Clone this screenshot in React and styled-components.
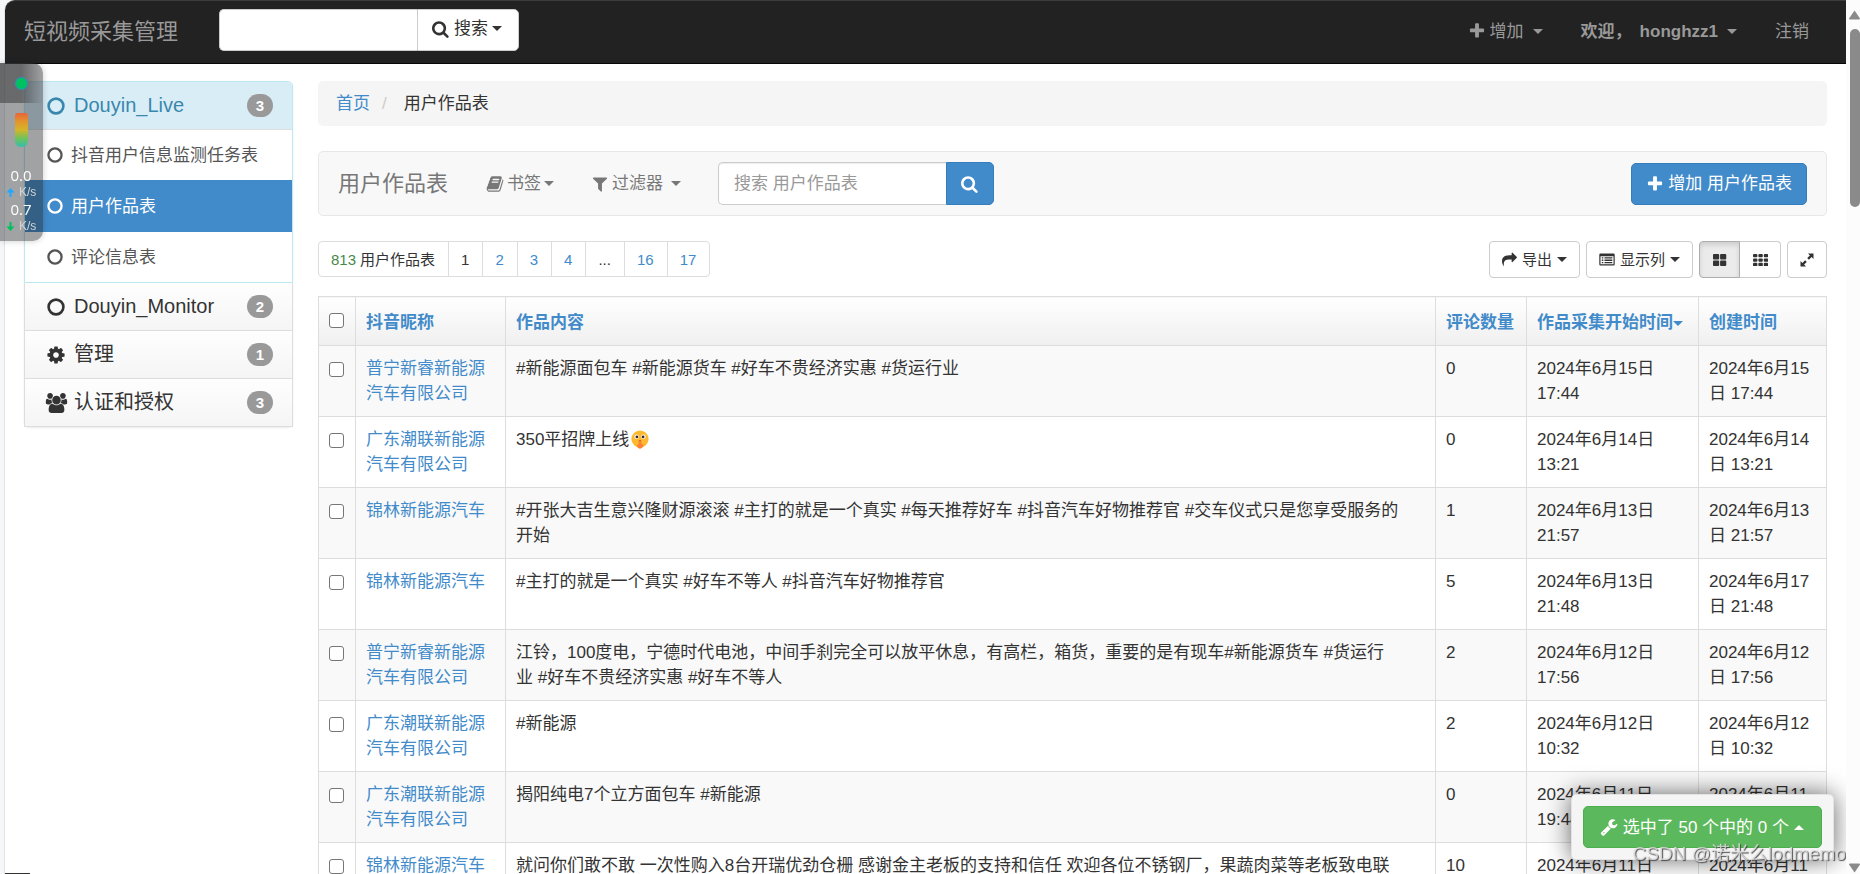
import React from "react";
import styled, { createGlobalStyle, css } from "styled-components";

const GlobalStyle = createGlobalStyle`
  *, *::before, *::after { box-sizing: border-box; }
  html { scrollbar-width: none; }
  body {
    margin: 0;
    background: #f6f7f8;
    color: #333;
    font: 17px/25px "Liberation Sans", "Noto Sans CJK SC", sans-serif;
  }
  a { color: #428bca; text-decoration: none; }
  button, input { font: inherit; color: inherit; margin: 0; }
  button { cursor: pointer; }
  ul, ol { list-style: none; margin: 0; padding: 0; }
`;

/* ---------- icons ---------- */

const PATHS = {
  search:
    "M1152 832q0-185-131.5-316.5t-316.5-131.5-316.5 131.5-131.5 316.5 131.5 316.5 316.5 131.5 316.5-131.5 131.5-316.5zm512 832q0 52-38 90t-90 38q-54 0-90-38l-343-342q-179 124-399 124-143 0-273.5-55.5t-225-150-150-225-55.5-273.5 55.5-273.5 150-225 225-150 273.5-55.5 273.5 55.5 225 150 150 225 55.5 273.5q0 220-124 399l343 343q37 37 37 90z",
  book:
    "M1703 478q40 57 18 129l-275 906q-19 64-76.5 107.5t-122.5 43.5h-923q-77 0-148.5-53.5t-99.5-131.5q-24-67-2-127 0-4 3-27t4-37q1-8-3-21.5t-3-19.5q2-11 8-21t16.5-23.5 16.5-23.5q23-38 45-91.5t30-91.5q3-10 .5-30t-.5-28q3-11 17-28t17-23q21-36 42-92t25-90q1-9-2.5-32t.5-28q4-13 22-30.5t22-22.5q19-26 42.5-84.5t27.5-96.5q1-8-3-25.5t-2-26.5q2-8 9-18t18-23 17-21q8-12 16.5-30.5t15-35 16-36 19.5-32 26.5-23.5 36-11.5 47.5 5.5l-1 3q38-9 51-9h761q74 0 114 56t18 130l-274 906q-36 119-71.5 153.5t-128.5 34.5h-869q-27 0-38 15-11 16-1 43 24 70 144 70h923q29 0 56-15.5t35-41.5l300-987q7-22 5-57 38 15 59 43zm-1064 2q-4 13 2 22.5t20 9.5h608q13 0 25.5-9.5t16.5-22.5l21-64q4-13-2-22.5t-20-9.5h-608q-13 0-25.5 9.5t-16.5 22.5zm-83 256q-4 13 2 22.5t20 9.5h608q13 0 25.5-9.5t16.5-22.5l21-64q4-13-2-22.5t-20-9.5h-608q-13 0-25.5 9.5t-16.5 22.5z",
  filter:
    "M1595 295q17 41-14 70l-493 493v742q0 42-39 59-13 5-25 5-27 0-45-19l-256-256q-19-19-19-45v-486l-493-493q-31-29-14-70 17-39 59-39h1280q42 0 59 39z",
  plus:
    "M1600 736v192q0 40-28 68t-68 28h-416v416q0 40-28 68t-68 28h-192q-40 0-68-28t-28-68v-416h-416q-40 0-68-28t-28-68v-192q0-40 28-68t68-28h416v-416q0-40 28-68t68-28h192q40 0 68 28t28 68v416h416q40 0 68 28t28 68z",
  cog:
    "M1152 896q0-106-75-181t-181-75-181 75-75 181 75 181 181 75 181-75 75-181zm512-109v222q0 12-8 23t-20 13l-185 28q-19 54-39 91 35 50 107 138 10 12 10 25t-9 23q-27 37-99 108t-94 71q-12 0-26-9l-138-108q-44 23-91 38-16 136-29 186-7 28-36 28h-222q-14 0-24.5-8.5t-11.5-21.5l-28-184q-49-16-90-37l-141 107q-10 9-25 9-14 0-25-11-126-114-165-168-7-10-7-23 0-12 8-23 15-21 51-66.5t54-70.5q-27-50-41-99l-183-27q-13-2-21-12.5t-8-23.5v-222q0-12 8-23t19-13l186-28q14-46 39-92-40-57-107-138-10-12-10-24 0-10 9-23 26-36 98.5-107.5t94.5-71.5q13 0 26 10l138 107q44-23 91-38 16-136 29-186 7-28 36-28h222q14 0 24.5 8.5t11.5 21.5l28 184q49 16 90 37l142-107q9-9 24-9 13 0 25 10 129 119 165 170 7 8 7 22 0 12-8 23-15 21-51 66.5t-54 70.5q26 50 41 98l183 28q13 2 21 12.5t8 23.5z",
  group:
    "M657 896q-162 5-265 128h-134q-82 0-138-40.5t-56-118.5q0-353 124-353 6 0 43.5 21t97.5 42.5 119 21.5q67 0 133-23-5 37-5 66 0 139 81 256zm1071 637q0 120-73 189.5t-194 69.5h-874q-121 0-194-69.5t-73-189.5q0-53 3.5-103.5t14-109 26.5-108.5 43-97.5 62-81 85.5-53.5 111.5-20q10 0 43 21.5t73 48 107 48 135 21.5 135-21.5 107-48 73-48 43-21.5q61 0 111.5 20t85.5 53.5 62 81 43 97.5 26.5 108.5 14 109 3.5 103.5zm-1024-1277q0 106-75 181t-181 75-181-75-75-181 75-181 181-75 181 75 75 181zm704 384q0 159-112.5 271.5t-271.5 112.5-271.5-112.5-112.5-271.5 112.5-271.5 271.5-112.5 271.5 112.5 112.5 271.5zm576 225q0 78-56 118.5t-138 40.5h-134q-103-123-265-128 81-117 81-256 0-29-5-66 66 23 133 23 59 0 119-21.5t97.5-42.5 43.5-21q124 0 124 353zm-128-609q0 106-75 181t-181 75-181-75-75-181 75-181 181-75 181 75 75 181z",
  share:
    "M1792 640q0 26-19 45l-512 512q-19 19-45 19t-45-19-19-45v-256h-224q-98 0-175.5 6t-154 21.5-133 42.5-105.5 69.5-80 101-48.5 138.5-17.5 181q0 55 5 123 0 6 2.5 23.5t2.5 26.5q0 15-8.5 25t-23.5 10q-16 0-28-17-7-9-13-22t-13.5-30-10.5-24q-127-285-127-451 0-199 53-333 162-403 875-403h224v-256q0-26 19-45t45-19 45 19l512 512q19 19 19 45z",
  wrench:
    "M448 1472q0-26-19-45t-45-19-45 19-19 45 19 45 45 19 45-19 19-45zm644-420l-682 682q-37 37-90 37-52 0-91-37l-106-108q-38-36-38-90 0-53 38-91l681-681q39 98 114.5 173.5t173.5 114.5zm634-435q0 39-23 106-47 134-164.5 217.5t-258.5 83.5q-185 0-316.5-131.5t-131.5-316.5 131.5-316.5 316.5-131.5q58 0 121.5 16.5t107.5 46.5q16 11 16 28t-16 28l-293 169v224l193 107q5-3 79-48.5t135.5-81 70.5-35.5q15 0 23.5 10t8.5 25z",
};

const IconSvg = styled.svg`
  flex: none;
  display: block;
  fill: currentColor;
`;

const Icon = ({ name, size = 18 }) => {
  const w = name === "group" ? 2048 : 1792;
  return (
    <IconSvg
      width={Math.round((size * w) / 1792)}
      height={size}
      viewBox={`0 0 ${w} 1792`}
      aria-hidden="true"
    >
      <path d={PATHS[name]} />
    </IconSvg>
  );
};

const Ring = ({ size }) => (
  <IconSvg width={size} height={size} viewBox="0 0 18 18" aria-hidden="true">
    <circle cx="9" cy="9" r="7.4" fill="none" stroke="currentColor" strokeWidth="2.6" />
  </IconSvg>
);

const ListAltIcon = () => (
  <IconSvg width="16" height="14" viewBox="0 0 16 14" aria-hidden="true">
    <path
      fillRule="evenodd"
      d="M1.5 0.5h13a1.2 1.2 0 0 1 1.2 1.2v9.6a1.2 1.2 0 0 1-1.2 1.2h-13a1.2 1.2 0 0 1-1.2-1.2V1.7A1.2 1.2 0 0 1 1.5.5zM1.5 3.2v8h13v-8z"
    />
    <path d="M2.8 4.3h1.5v1.3H2.8zM5.5 4.3h7.8v1.3H5.5zM2.8 6.6h1.5v1.3H2.8zM5.5 6.6h7.8v1.3H5.5zM2.8 8.9h1.5v1.3H2.8zM5.5 8.9h7.8v1.3H5.5z" />
  </IconSvg>
);

const GridIcon = ({ count }) => {
  const step = count === 2 ? 7.6 : 5.4;
  const w = count === 2 ? 6.6 : 4.4;
  const h = count === 2 ? 5.6 : 3.4;
  const stepY = count === 2 ? 6.5 : 4.5;
  const cells = [];
  for (let r = 0; r < count; r++)
    for (let c = 0; c < count; c++)
      cells.push(<rect key={`${r}${c}`} x={c * step} y={r * stepY} width={w} height={h} rx="1" />);
  return (
    <IconSvg width={count === 2 ? 14 : 15} height="12" viewBox="0 0 15 12.2" preserveAspectRatio="none" aria-hidden="true">
      {cells}
    </IconSvg>
  );
};

const ExpandIcon = () => (
  <IconSvg width="14" height="14" viewBox="0 0 14 14" aria-hidden="true">
    <path d="M8 .5h5.5V6L11.6 4.1 8.9 6.8 7.2 5.1 9.9 2.4zM6 13.5H.5V8l1.9 1.9 2.7-2.7 1.7 1.7-2.7 2.7z" />
  </IconSvg>
);

const ShushFace = styled(({ className }) => (
  <svg className={className} width="18" height="19" viewBox="0 0 18 19" role="img" aria-label="嘘">
    <circle cx="9" cy="9" r="8.6" fill="#fdb92e" />
    <circle cx="5.6" cy="6.8" r="2.2" fill="#fff" />
    <circle cx="12.4" cy="6.8" r="2.2" fill="#fff" />
    <circle cx="5.9" cy="6.9" r="1.4" fill="#402a32" />
    <circle cx="12.1" cy="6.9" r="1.4" fill="#402a32" />
    <circle cx="9" cy="11.4" r="1.3" fill="#c8562b" />
    <path d="M8.2 10.800q.8-.8 1.600 0l.4 2.800q2.400.4 1.900 2.700-.8 2.300-3.100 2.500-2.400-.3-2.900-2.300-.1-2 1.700-2.700z" fill="#ff7f33" />
  </svg>
))`
  vertical-align: -4px;
  margin-left: 2px;
`;

const Caret = styled.span`
  flex: none;
  display: inline-block;
  margin-left: ${(p) => (p.$spaced ? 5 : 0)}px;
  border-left: 5px solid transparent;
  border-right: 5px solid transparent;
  ${(p) =>
    p.$up
      ? css`border-bottom: 5px solid currentColor;`
      : css`border-top: 5px solid currentColor;`}
  vertical-align: middle;
`;

/* ---------- frame ---------- */

const Page = styled.div`
  min-height: 100vh;
  margin: 0 14px 0 5px;
  background: #fff;
  border-radius: 10px 0 0 0;
  box-shadow: -1px 0 0 #e4e4e6;
`;

const TopBar = styled.header`
  display: flex;
  align-items: center;
  height: 64px;
  padding: 0 19px 2px;
  background: #222;
  border-top: 1px solid #3c3c3c;
  border-bottom: 1px solid #080808;
  border-radius: 10px 0 0 0;
  color: #999;
`;

const Brand = styled.a`
  color: #999;
  font-size: 22px;
  line-height: 25px;
  width: 195px;
`;

const TopSearch = styled.form`
  display: flex;
  height: 42px;
  margin-bottom: 3px;
  color: #333;
`;

const TopInput = styled.input`
  width: 198px;
  padding: 0 12px;
  border: 1px solid #ccc;
  border-right: 0;
  border-radius: 5px 0 0 5px;
  background: #fff;
  outline: 0;
`;

const TopSearchButton = styled.button`
  display: flex;
  align-items: center;
  gap: 4px;
  padding: 0 16px 2px 14px;
  border: 1px solid #ccc;
  border-radius: 0 5px 5px 0;
  background: #fff;
`;

const TopNav = styled.nav`
  display: flex;
  align-items: center;
  margin-left: auto;
  gap: 38px;
  padding-right: 18px;
`;

const TopLink = styled.a`
  display: flex;
  align-items: center;
  gap: 4px;
  color: #999;
  font-weight: ${(p) => (p.$user ? 700 : 400)};
`;

const UserName = styled.span`
  margin-left: 4px;
`;

const Body = styled.div`
  display: flex;
  align-items: flex-start;
  gap: 25px;
  padding: 17px 19px 0;
`;

/* ---------- sidebar ---------- */

const Sidebar = styled.aside`
  flex: none;
  width: 269px;
  border-radius: 5px;
  box-shadow: 0 1px 2px rgba(0, 0, 0, 0.08);
`;

const GroupBox = styled.section`
  border: 1px solid ${(p) => (p.$open ? "#bce8f1" : "#ddd")};
  border-top-width: ${(p) => (p.$open ? 1 : 0)}px;
  border-radius: ${(p) => (p.$open ? "5px 5px 0 0" : 0)};
`;

const GroupHead = styled.a`
  display: flex;
  align-items: center;
  gap: 9px;
  height: ${(p) => (p.$open ? 48 : 47)}px;
  padding: 0 19px 0 22px;
  font-size: 20px;
  color: ${(p) => (p.$open ? "#3a87ad" : "#333")};
  background: ${(p) => (p.$open ? "#d9edf7" : "linear-gradient(#fefefe, #f5f5f5)")};
  border-bottom: ${(p) => (p.$open ? "1px solid #ddd" : "0")};
  border-radius: ${(p) => (p.$open ? "4px 4px 0 0" : 0)};
`;

const HeadIcon = styled.span`
  display: flex;
  justify-content: center;
  width: 18px;
`;

const Badge = styled.span`
  margin-left: auto;
  min-width: 26px;
  padding: 0 8px;
  border-radius: 12px;
  background: #999;
  color: #fff;
  font-size: 15px;
  font-weight: 700;
  line-height: 23px;
  text-align: center;
`;

const SubItem = styled.a`
  display: flex;
  align-items: center;
  gap: 8px;
  height: ${(p) => (p.$active ? 52 : 50)}px;
  padding-left: 22px;
  color: ${(p) => (p.$active ? "#fff" : "#555")};
  background: ${(p) => (p.$active ? "#428bca" : "#fff")};
`;

/* ---------- main ---------- */

const Main = styled.main`
  flex: 1;
  min-width: 0;
`;

const Breadcrumb = styled.ol`
  display: flex;
  height: 45px;
  align-items: center;
  padding: 0 18px;
  border-radius: 5px;
  background: #f5f5f5;
  li + li::before {
    content: "/";
    color: #ccc;
    padding: 0 17px 0 12px;
  }
`;

const ModelBar = styled.div`
  display: flex;
  align-items: center;
  height: 65px;
  margin-top: 25px;
  padding: 0 19px;
  background: #f8f8f8;
  border: 1px solid #e7e7e7;
  border-radius: 5px;
  color: #777;
`;

const ModelTitle = styled.h1`
  margin: 0 38px 0 0;
  font-size: 22px;
  font-weight: 400;
  line-height: 25px;
`;

const MenuLink = styled.a`
  display: flex;
  align-items: center;
  gap: 3px;
  margin-right: 37px;
  color: #777;
`;

const ListSearch = styled.form`
  display: flex;
  height: 43px;
`;

const ListInput = styled.input`
  width: 228px;
  padding: 0 15px;
  border: 1px solid #ccc;
  border-right: 0;
  border-radius: 5px 0 0 5px;
  background: #fff;
  box-shadow: inset 0 1px 1px rgba(0, 0, 0, 0.075);
  outline: 0;
  &::placeholder { color: #999; opacity: 1; }
`;

const ListSearchButton = styled.button`
  display: flex;
  align-items: center;
  justify-content: center;
  width: 48px;
  border: 1px solid #357ebd;
  border-radius: 0 5px 5px 0;
  background: #428bca;
  color: #fff;
`;

const AddButton = styled.a`
  display: flex;
  align-items: center;
  gap: 4px;
  height: 42px;
  margin-left: auto;
  padding: 0 14px;
  border: 1px solid #357ebd;
  border-radius: 5px;
  background: #428bca;
  color: #fff;
`;

const ListHead = styled.div`
  display: flex;
  justify-content: space-between;
  align-items: flex-start;
  margin: 25px 0 18px;
  font-size: 15px;
`;

const Pager = styled.ul`
  display: flex;
  height: 36px;
  border: 1px solid #ddd;
  border-radius: 4px;
`;

const PageItem = styled.li`
  display: flex;
  align-items: center;
  padding: 0 13px 0 12px;
  color: #333;
  & + & { border-left: 1px solid #ddd; }
  em { font-style: normal; color: #468847; margin-right: 4px; }
`;

const Tools = styled.div`
  display: flex;
  gap: 6px;
`;

const ToolGroup = styled.div`
  display: flex;
`;

const ToolButton = styled.button`
  display: flex;
  align-items: center;
  justify-content: center;
  gap: 5px;
  height: 37px;
  padding: 0 12px;
  min-width: 40px;
  border: 1px solid #ccc;
  border-radius: 4px;
  background: #fff;
  ${ToolGroup} > & { width: 41px; }
  ${ToolGroup} > &:first-child { border-radius: 4px 0 0 4px; }
  ${ToolGroup} > &:last-child { border-radius: 0 4px 4px 0; border-left: 0; }
  ${(p) =>
    p.$pressed &&
    css`
      background: #ebebeb;
      border-color: #adadad;
      box-shadow: inset 0 3px 5px rgba(0, 0, 0, 0.125);
    `}
`;

/* ---------- table ---------- */

const Table = styled.table`
  width: 100%;
  table-layout: fixed;
  border-collapse: collapse;
`;

const Col = styled.col`
  width: ${(p) => (p.$w ? `${p.$w}px` : "auto")};
`;

const Th = styled.th`
  height: 49px;
  padding: 2px 0 0 10px;
  border: 1px solid #ddd;
  background: linear-gradient(#fff, #efefef);
  text-align: left;
  white-space: nowrap;
`;

const Row = styled.tr`
  background: #fff;
  &:nth-child(odd) { background: #f9f9f9; }
`;

const Td = styled.td`
  height: 71px;
  padding: 10px;
  border: 1px solid #ddd;
  vertical-align: top;
  white-space: pre-line;
`;

const Check = styled.input`
  display: block;
  appearance: none;
  width: 15px;
  height: 15px;
  margin: ${(p) => (p.$head ? "0 0 4px" : "6px 0 0")};
  border: 1px solid #767676;
  border-radius: 3px;
  background: #fff;
  &:checked { background: #428bca; }
`;

/* ---------- overlays ---------- */

const ActionPanel = styled.div`
  position: fixed;
  right: 26px;
  bottom: 14px;
  padding: 11px;
  border: 1px solid #e3e3e3;
  border-radius: 5px;
  background: #f5f5f5;
  box-shadow: 0 0 25px rgba(0, 0, 0, 0.6);
`;

const ActionButton = styled.button`
  display: flex;
  align-items: center;
  gap: 5px;
  height: 42px;
  padding: 0 17px 0 16px;
  border: 1px solid #4cae4c;
  border-radius: 5px;
  background: #5cb85c;
  color: #fff;
`;

const Watermark = styled.div`
  position: fixed;
  right: 14px;
  bottom: 8px;
  font-size: 19px;
  line-height: 25px;
  color: rgba(225, 225, 225, 0.8);
  text-shadow: 1px 1px 1px rgba(60, 60, 60, 0.9);
  pointer-events: none;
`;

const Scroll = styled.div`
  position: fixed;
  top: 0;
  right: 0;
  bottom: 0;
  width: 14px;
  display: flex;
  flex-direction: column;
  align-items: flex-end;
  padding: 10px 0 1px;
  background: #fcfcfc;
  color: #8a8a8a;
`;

const Thumb = styled.div`
  width: 10px;
  height: 178px;
  margin: 9px 0 auto;
  border-radius: 5px;
  background: #8a8a8a;
`;

const Arrow = styled(IconSvg)`
  width: 11px;
  height: 10px;
`;

const Monitor = styled.aside`
  position: fixed;
  left: 0;
  top: 63px;
  width: 43px;
  height: 178px;
  display: flex;
  flex-direction: column;
  align-items: center;
  border-radius: 0 10px 10px 0;
  overflow: hidden;
  background: rgba(38, 39, 45, 0.43);
  box-shadow: 0 0 6px rgba(0, 0, 0, 0.2);
  color: #fff;
`;

const MonitorTop = styled.div`
  width: 100%;
  height: 40px;
  display: flex;
  align-items: center;
  justify-content: center;
  background: linear-gradient(90deg, rgba(60, 60, 62, 0.55) 50%, rgba(60, 60, 62, 0));
`;

const Dot = styled.span`
  width: 13px;
  height: 13px;
  border: 1px solid #2b8fc0;
  border-radius: 50%;
  background: #00c060;
`;

const Gauge = styled.div`
  width: 13px;
  height: 34px;
  margin: 10px 0 17px;
  border-radius: 3px 3px 6px 6px;
  background: linear-gradient(#e8643a, #e3952c 25%, #d4b52a 50%, #6ec25c 75%, #34bfae);
`;

const Rate = styled.div`
  width: 100%;
  padding-left: 6px;
  font-size: 12px;
  line-height: 12px;
  color: #d4d4d6;
  div { display: flex; align-items: center; gap: 4px; }
  strong {
    display: block;
    width: 30px;
    color: #fff;
    font: 15px/22px "Open Sans", sans-serif;
    text-align: center;
  }
`;

const StatusLine = styled.div`
  position: fixed;
  left: 5px;
  bottom: 0;
  width: 25px;
  height: 1px;
  background: #333;
`;

/* ---------- data ---------- */

const PN = "普宁新睿新能源汽车有限公司";
const GD = "广东潮联新能源汽车有限公司";
const JL = "锦林新能源汽车";

const ROWS = [
  [PN, "#新能源面包车 #新能源货车 #好车不贵经济实惠 #货运行业", 0, "2024年6月15日 17:44"],
  [GD, <>350平招牌上线<ShushFace /></>, 0, "2024年6月14日 13:21"],
  [JL, "#开张大吉生意兴隆财源滚滚 #主打的就是一个真实 #每天推荐好车 #抖音汽车好物推荐官 #交车仪式只是您享受服务的\n开始", 1, "2024年6月13日 21:57"],
  [JL, "#主打的就是一个真实 #好车不等人 #抖音汽车好物推荐官", 5, "2024年6月13日 21:48", "2024年6月17日 21:48"],
  [PN, "江铃，100度电，宁德时代电池，中间手刹完全可以放平休息，有高栏，箱货，重要的是有现车#新能源货车 #货运行\n业 #好车不贵经济实惠 #好车不等人", 2, "2024年6月12日 17:56"],
  [GD, "#新能源", 2, "2024年6月12日 10:32"],
  [GD, "揭阳纯电7个立方面包车 #新能源", 0, "2024年6月11日 19:44"],
  [JL, "就问你们敢不敢 一次性购入8台开瑞优劲仓栅 感谢金主老板的支持和信任 欢迎各位不锈钢厂，果蔬肉菜等老板致电联", 10, "2024年6月11日"],
];

const GROUPS = [
  { name: "Douyin_Monitor", n: 2, icon: <Ring size={18} /> },
  { name: "管理", n: 1, icon: <Icon name="cog" size={20} /> },
  { name: "认证和授权", n: 3, icon: <Icon name="group" size={20} /> },
];

const stop = (e) => e.preventDefault();

export default function App() {
  return (
    <>
      <GlobalStyle />
      <Page>
        <TopBar>
          <Brand href="#">短视频采集管理</Brand>
          <TopSearch onSubmit={stop}>
            <TopInput type="text" aria-label="搜索" />
            <TopSearchButton type="submit">
              <Icon name="search" />搜索<Caret />
            </TopSearchButton>
          </TopSearch>
          <TopNav>
            <TopLink href="#"><Icon name="plus" />增加<Caret $spaced /></TopLink>
            <TopLink href="#" $user>欢迎，<UserName>honghzz1</UserName><Caret $spaced /></TopLink>
            <TopLink href="#">注销</TopLink>
          </TopNav>
        </TopBar>

        <Body>
          <Sidebar>
            <GroupBox $open>
              <GroupHead href="#" $open>
                <HeadIcon><Ring size={18} /></HeadIcon>Douyin_Live<Badge>3</Badge>
              </GroupHead>
              <SubItem href="#"><Ring size={16} />抖音用户信息监测任务表</SubItem>
              <SubItem href="#" $active><Ring size={16} />用户作品表</SubItem>
              <SubItem href="#"><Ring size={16} />评论信息表</SubItem>
            </GroupBox>
            {GROUPS.map((g) => (
              <GroupBox key={g.name}>
                <GroupHead href="#">
                  <HeadIcon>{g.icon}</HeadIcon>{g.name}<Badge>{g.n}</Badge>
                </GroupHead>
              </GroupBox>
            ))}
          </Sidebar>

          <Main>
            <Breadcrumb>
              <li><a href="#">首页</a></li>
              <li>用户作品表</li>
            </Breadcrumb>

            <ModelBar>
              <ModelTitle>用户作品表</ModelTitle>
              <MenuLink href="#"><Icon name="book" />书签<Caret /></MenuLink>
              <MenuLink href="#"><Icon name="filter" />过滤器<Caret $spaced /></MenuLink>
              <ListSearch onSubmit={stop}>
                <ListInput type="text" placeholder="搜索 用户作品表" aria-label="搜索 用户作品表" />
                <ListSearchButton type="submit" aria-label="搜索"><Icon name="search" /></ListSearchButton>
              </ListSearch>
              <AddButton href="#"><Icon name="plus" />增加 用户作品表</AddButton>
            </ModelBar>

            <ListHead>
              <Pager>
                <PageItem><em>813</em>用户作品表</PageItem>
                <PageItem>1</PageItem>
                <PageItem><a href="#">2</a></PageItem>
                <PageItem><a href="#">3</a></PageItem>
                <PageItem><a href="#">4</a></PageItem>
                <PageItem>...</PageItem>
                <PageItem><a href="#">16</a></PageItem>
                <PageItem><a href="#">17</a></PageItem>
              </Pager>
              <Tools>
                <ToolButton><Icon name="share" size={15} />导出<Caret /></ToolButton>
                <ToolButton><ListAltIcon />显示列<Caret /></ToolButton>
                <ToolGroup>
                  <ToolButton $pressed aria-label="大图"><GridIcon count={2} /></ToolButton>
                  <ToolButton aria-label="小图"><GridIcon count={3} /></ToolButton>
                </ToolGroup>
                <ToolButton aria-label="全屏"><ExpandIcon /></ToolButton>
              </Tools>
            </ListHead>

            <Table>
              <colgroup>
                <Col $w={37} /><Col $w={150} /><Col /><Col $w={91} /><Col $w={172} /><Col $w={128} />
              </colgroup>
              <thead>
                <tr>
                  <Th><Check $head type="checkbox" aria-label="全选" /></Th>
                  <Th><a href="#">抖音昵称</a></Th>
                  <Th><a href="#">作品内容</a></Th>
                  <Th><a href="#">评论数量</a></Th>
                  <Th><a href="#">作品采集开始时间<Caret /></a></Th>
                  <Th><a href="#">创建时间</a></Th>
                </tr>
              </thead>
              <tbody>
                {ROWS.map(([name, text, n, start, created], i) => (
                  <Row key={i}>
                    <Td><Check type="checkbox" aria-label={name} /></Td>
                    <Td><a href="#">{name}</a></Td>
                    <Td>{text}</Td>
                    <Td>{n}</Td>
                    <Td>{start}</Td>
                    <Td>{created || start}</Td>
                  </Row>
                ))}
              </tbody>
            </Table>
          </Main>
        </Body>
      </Page>

      <ActionPanel>
        <ActionButton>
          <Icon name="wrench" />选中了 50 个中的 0 个<Caret $up />
        </ActionButton>
      </ActionPanel>
      <Watermark>CSDN @诺米么lodmemo</Watermark>
      <StatusLine />

      <Scroll aria-hidden="true">
        <Arrow viewBox="0 0 11 10"><path d="M5.5 0.5L11 8.5Q11 9.5 10 9.5H1Q0 9.5 0 8.5z" /></Arrow>
        <Thumb />
        <Arrow viewBox="0 0 11 10"><path d="M5.5 9.5L0 1.5Q0 .5 1 .5H10Q11 .5 11 1.5z" /></Arrow>
      </Scroll>

      <Monitor>
        <MonitorTop><Dot /></MonitorTop>
        <Gauge />
        <Rate>
          <strong>0.0</strong>
          <div>
            <IconSvg width="9" height="9" viewBox="0 0 9 9"><path fill="#1fa8ff" d="M4.5 0L8.5 4.5H5.5V9h-2V4.5h-3z" /></IconSvg>
            K/s
          </div>
          <strong>0.7</strong>
          <div>
            <IconSvg width="9" height="9" viewBox="0 0 9 9"><path fill="#00c060" d="M4.5 9L.5 4.5h3V0h2v4.5h3z" /></IconSvg>
            K/s
          </div>
        </Rate>
      </Monitor>
    </>
  );
}
